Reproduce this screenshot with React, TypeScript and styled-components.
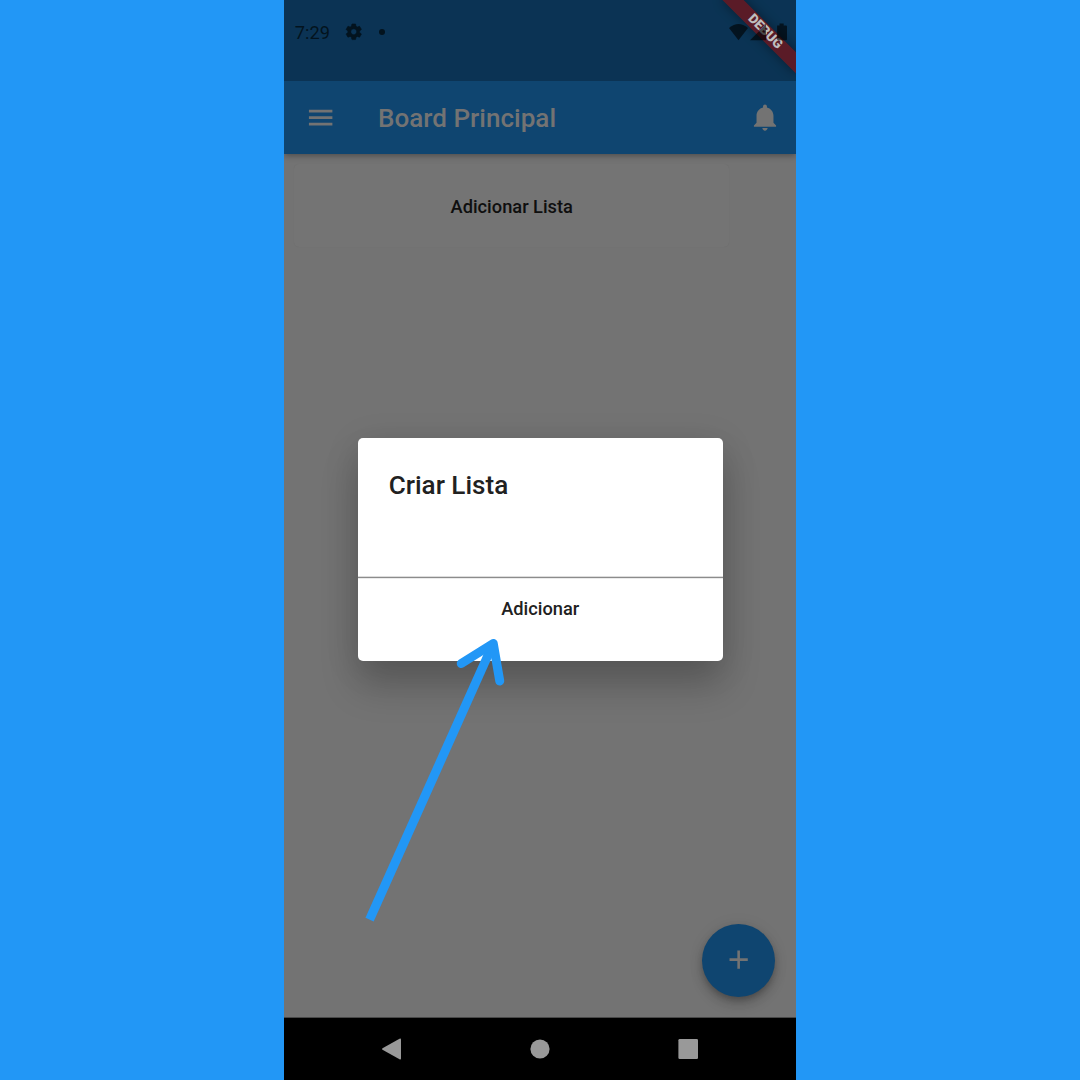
import React from "react";
import styled, { createGlobalStyle } from "styled-components";

const Global = createGlobalStyle`
  * { box-sizing: border-box; }
  body { margin: 0; background: #2297f6; font-family: Roboto, "Liberation Sans", sans-serif; }
  button { font: inherit; border: 0; background: none; padding: 0; color: inherit; }
`;

const Page = styled.main`
  height: 1080px;
  display: flex;
  justify-content: center;
  background: #2297f6;
  overflow: hidden;
`;

const Phone = styled.div`
  position: relative;
  width: 511.5px;
  height: 1080px;
  display: flex;
  flex-direction: column;
  overflow: hidden;
  background: #737373;
`;

const StatusBar = styled.div`
  position: relative;
  z-index: 2;
  flex: none;
  height: 81px;
  background: #0f4570;
  overflow: hidden;
`;

const StatusScrim = styled.div`
  position: relative;
  height: 81px;
  background: rgba(0, 0, 0, 0.25);
  display: flex;
  justify-content: space-between;
  padding: 16px 7.5px 0 10.5px;
  color: #03131e;
`;

const StatusGroup = styled.div<{ $gap: number }>`
  display: flex;
  align-items: center;
  height: 32px;
  gap: ${(p) => p.$gap}px;
`;

const Clock = styled.span`
  font-size: 18.25px;
  line-height: 34px;
  width: 37px;
  padding-top: 1px;
`;

const Dot = styled.i`
  width: 6px;
  height: 6px;
  margin-left: 4px;
  border-radius: 50%;
  background: currentColor;
`;

const Ribbon = styled.div`
  position: absolute;
  left: 100%;
  top: 0;
  width: 0;
  height: 0;
  transform: rotate(45deg);
`;

const RibbonBand = styled.div`
  position: absolute;
  left: -52.1px;
  top: 36.5px;
  width: 104.2px;
  height: 15.6px;
  padding-left: 1px;
  background: rgba(175, 22, 22, 0.66);
  box-shadow: 0 0 12px rgba(0, 0, 0, 0.4);
  color: #fff;
  font-size: 13.3px;
  font-weight: 900;
  line-height: 14px;
  text-align: center;
`;

const AppBar = styled.header`
  position: relative;
  z-index: 1;
  flex: none;
  height: 73px;
  display: flex;
  align-items: center;
  padding: 0 14px 0 20.5px;
  background: #0f4570;
  color: #737373;
  box-shadow: 0 2px 6px rgba(0, 0, 0, 0.32);
`;

const AppTitle = styled.h1`
  flex: 1;
  margin: 0 0 0 42px;
  font-size: 26.07px;
  font-weight: 500;
  line-height: 32px;
`;

const Body = styled.section`
  flex: 1;
  display: flex;
  flex-direction: column;
  align-items: flex-start;
  padding: 10px;
`;

const ListCard = styled.div`
  width: 435px;
  height: 83px;
  padding-top: 2px;
  border-radius: 5px;
  display: flex;
  align-items: center;
  justify-content: center;
  background: #747474;
  box-shadow: 0 0 1px rgba(0, 0, 0, 0.08);
`;

const TextButton = styled.button<{ $color: string }>`
  font-size: 18.25px;
  font-weight: 500;
  line-height: 22px;
  color: ${(p) => p.$color};
`;

const NavBar = styled.nav`
  position: relative;
  z-index: 1;
  flex: none;
  height: 62px;
  padding: 0 0.5px 1px 0;
  background: #000;
  box-shadow: 0 -1px 0 #484848;
  display: flex;
  align-items: center;
  justify-content: center;
  gap: 127.4px;
  color: #999;
`;

const Fab = styled.button`
  position: absolute;
  right: 20.5px;
  bottom: 83.5px;
  width: 73px;
  height: 73px;
  border-radius: 50%;
  display: flex;
  align-items: center;
  justify-content: center;
  background: #0f4570;
  color: #737373;
  box-shadow: 0 4px 6px -1px rgba(0, 0, 0, 0.22), 0 8px 13px rgba(0, 0, 0, 0.14),
    0 1px 16px rgba(0, 0, 0, 0.08);
`;

const Dialog = styled.div`
  position: absolute;
  left: 73.5px;
  top: 437.5px;
  width: 365px;
  height: 223px;
  border-radius: 5px;
  background: #fff;
  display: flex;
  flex-direction: column;
  box-shadow: 0 25px 38px rgba(0, 0, 0, 0.2), 0 6px 36px rgba(0, 0, 0, 0.11);
`;

const DialogTitle = styled.h2`
  margin: 0;
  height: 139px;
  padding: 31px 31px 0;
  font-size: 26.07px;
  font-weight: 500;
  line-height: 33px;
  color: #212121;
`;

const DialogActions = styled.div`
  flex: 1;
  display: flex;
  justify-content: center;
  align-items: flex-start;
  padding-top: 20px;
  border-top: 1px solid #8c8c8c;
  box-shadow: 0 -1px 0 #dcdcdc, inset 0 1px 0 #ebebeb;
`;

const Pointer = styled.svg`
  position: absolute;
  left: 0;
  top: 0;
  pointer-events: none;
`;

const Material = ({ d, size, weight = 0 }: { d: string; size: number; weight?: number }) => (
  <svg
    width={size}
    height={size}
    viewBox="0 0 24 24"
    fill="currentColor"
    stroke={weight ? "currentColor" : "none"}
    strokeWidth={weight}
  >
    <path d={d} />
  </svg>
);

const GEAR =
  "M19.14 12.94c.04-.3.06-.61.06-.94 0-.32-.02-.64-.07-.94l2.03-1.58c.18-.14.23-.41.12-.61l-1.92-3.32c-.12-.22-.37-.29-.59-.22l-2.39.96c-.5-.38-1.03-.7-1.62-.94l-.36-2.54c-.04-.24-.24-.41-.48-.41h-3.84c-.24 0-.43.17-.47.41l-.36 2.54c-.59.24-1.13.57-1.62.94l-2.39-.96c-.22-.08-.47 0-.59.22L2.74 8.87c-.12.21-.08.47.12.61l2.03 1.58c-.05.3-.09.63-.09.94s.02.64.07.94l-2.03 1.58c-.18.14-.23.41-.12.61l1.92 3.32c.12.22.37.29.59.22l2.39-.96c.5.38 1.03.7 1.62.94l.36 2.54c.05.24.24.41.48.41h3.84c.24 0 .44-.17.47-.41l.36-2.54c.59-.24 1.13-.56 1.62-.94l2.39.96c.22.08.47 0 .59-.22l1.92-3.32c.12-.22.07-.47-.12-.61l-2.01-1.58zM12 15.6c-1.98 0-3.6-1.62-3.6-3.6s1.62-3.6 3.6-3.6 3.6 1.62 3.6 3.6-1.62 3.6-3.6 3.6z";
const MENU = "M3 18h18v-2H3v2zm0-5h18v-2H3v2zm0-7v2h18V6H3z";
const BELL =
  "M11.5 22c1.1 0 2-.9 2-2h-4c0 1.1.9 2 2 2zm6.5-6v-5.5c0-3.07-2.13-5.64-5-6.32V3.5c0-.83-.67-1.5-1.5-1.5S10 2.67 10 3.5v.68c-2.87.68-5 3.25-5 6.32V16l-2 2v1h17v-1l-2-2z";
const PLUS = "M19 13h-6v6h-2v-6H5v-2h6V5h2v6h6v2z";

export default function App() {
  return (
    <Page>
      <Global />
      <Phone>
        <StatusBar>
          <Ribbon>
            <RibbonBand>DEBUG</RibbonBand>
          </Ribbon>
          <StatusScrim>
            <StatusGroup $gap={12}>
              <Clock>7:29</Clock>
              <Material d={GEAR} size={19.5} weight={0.7} />
              <Dot />
            </StatusGroup>
            <StatusGroup $gap={0}>
              <svg width="60" height="20" viewBox="-0.5 -0.2 60 20" fill="#000" fillOpacity="0.62">
                <path d="M0.5 5.8Q10-2.2 19.5 5.8L10 18Z" />
                <path d="M21.5 18L37.5 2V18Z" />
                <path d="M48.6 3.3h2.4V1.4h4.2v1.9h2.4q.9 0 .9.9V17.1q0 .9-.9.9h-8.1q-.9 0-.9-.9z" />
              </svg>
            </StatusGroup>
          </StatusScrim>
        </StatusBar>
        <AppBar>
          <Material d={MENU} size={31.3} />
          <AppTitle>Board Principal</AppTitle>
          <Material d={BELL} size={31.3} />
        </AppBar>
        <Body>
          <ListCard>
            <TextButton $color="#0f0f0f">Adicionar Lista</TextButton>
          </ListCard>
        </Body>
        <Fab>
          <Material d={PLUS} size={31.3} />
        </Fab>
        <NavBar>
          <svg width="21" height="22" viewBox="0 0 21 22" fill="currentColor">
            <path d="M.5 10.2Q-.3 11 .5 11.8L17.5 21.3Q19 22 19 20.5V1.5Q19 0 17.5.7Z" />
          </svg>
          <svg width="20" height="20" viewBox="0 0 20 20" fill="currentColor">
            <circle cx="10" cy="10" r="9.6" />
          </svg>
          <svg width="20" height="20" viewBox="0 0 20 20" fill="currentColor">
            <rect x="0.4" width="19.6" height="20" rx="1.3" />
          </svg>
        </NavBar>
        <Dialog>
          <DialogTitle>Criar Lista</DialogTitle>
          <DialogActions>
            <TextButton $color="#212121">Adicionar</TextButton>
          </DialogActions>
        </Dialog>
        <Pointer width="512" height="1080" viewBox="284.25 0 512 1080" fill="none" stroke="#2297f6" strokeWidth="9">
          <path d="M369.8 919.7L493.5 643.5" />
          <path d="M461.5 663.5L493.5 643.5L500 681" strokeLinecap="round" strokeLinejoin="round" />
        </Pointer>
      </Phone>
    </Page>
  );
}
